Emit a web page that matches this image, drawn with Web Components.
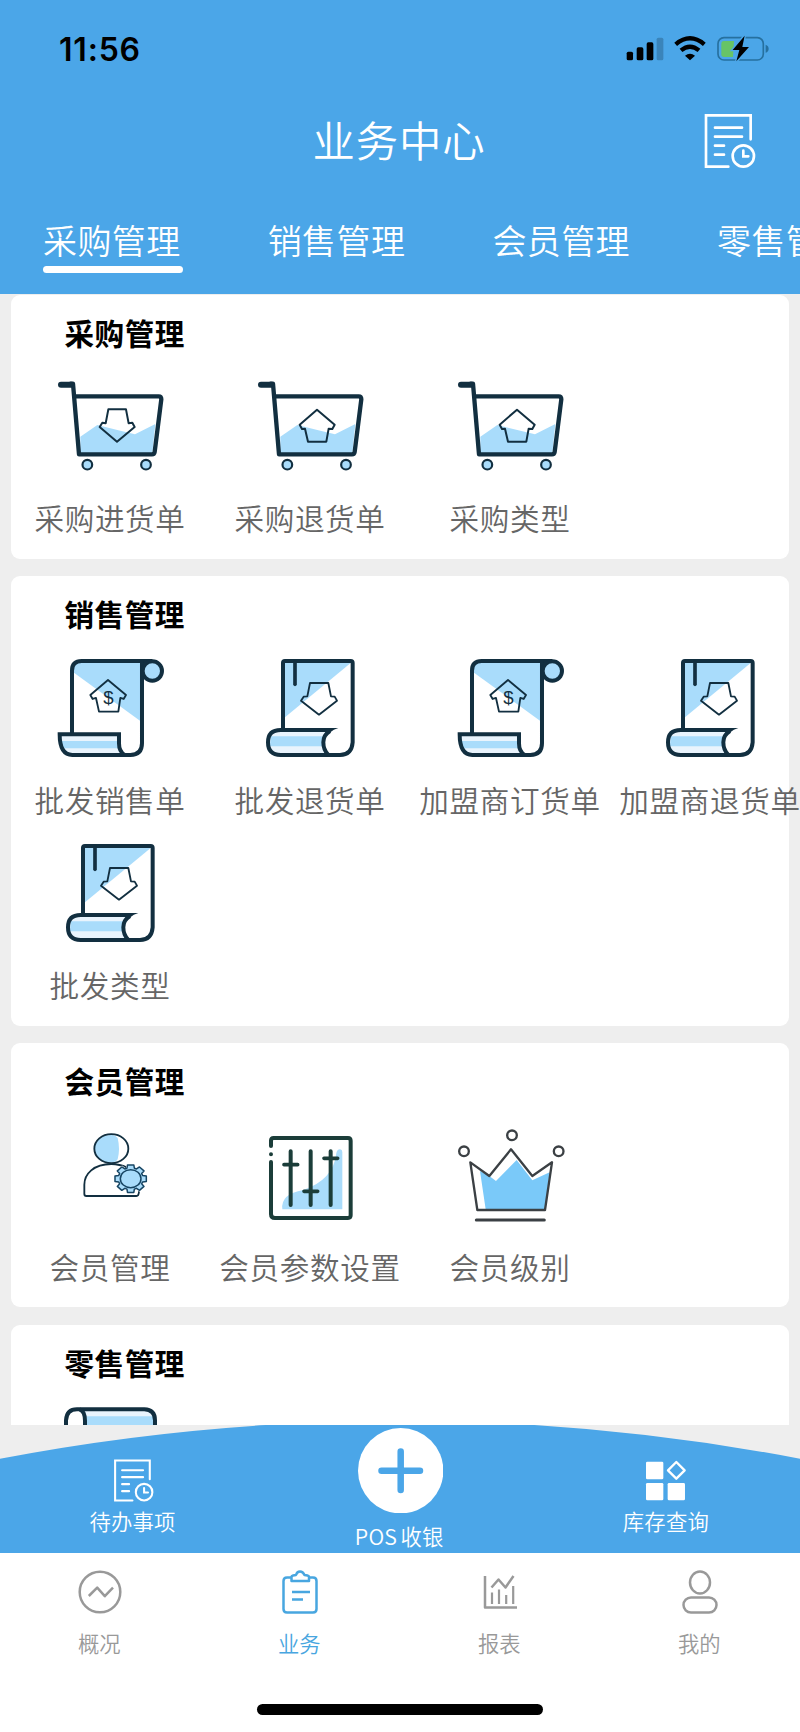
<!DOCTYPE html>
<html lang="zh-CN">
<head>
<meta charset="utf-8">
<title>业务中心</title>
<style>
html,body{margin:0;padding:0}
body{width:800px;height:1732px;overflow:hidden;background:#fff;font-family:"Noto Sans CJK SC",sans-serif;font-weight:350}
</style>
</head>
<body>
<business-app></business-app>
<script>
function define(name, html, setup) {
  const t = document.createElement('template');
  t.innerHTML = html;
  customElements.define(name, class extends HTMLElement {
    connectedCallback() {
      if (this.shadowRoot) return;
      this.attachShadow({mode: 'open'}).appendChild(t.content.cloneNode(true));
      if (setup) setup(this, this.shadowRoot);
    }
  });
}

function gear(cx, cy, sx, sy) {
  const p = [];
  for (let i = 0; i < 8; i++) {
    const a = i * Math.PI / 4;
    for (const [d, r] of [[-.3, .78], [-.2, 1], [.2, 1], [.3, .78]])
      p.push((cx + Math.cos(a + d) * r * sx).toFixed(1) + ' ' + (cy + Math.sin(a + d) * r * sy).toFixed(1));
  }
  return 'M' + p.join('L') + 'Z';
}

const NAVY = '#122f40', SKY = '#a9dcfb', PALE = '#e9f4fd';
const cart = arrow => `
<path fill="${SKY}" d="M241 440 292 405 352 420 405 433 466 402 457 489H241Z"/>
<g fill="none" stroke="${NAVY}" stroke-linejoin="round" stroke-linecap="round">
<path stroke-width="18" d="M183 284H214"/><path stroke-width="13" d="M212 281H219L237 493H456Q463 493 464 486L484 328Q484 319 476 319H226"/>
<path stroke-width="6" d="${arrow}"/></g>
<g fill="${SKY}" stroke="${NAVY}" stroke-width="6.500"><circle cx="262" cy="524" r="14.5"/><circle cx="438" cy="524" r="14.5"/></g>`;

const ICONS = {
  cartDown: ['171 249 320 320', cart('M325 358H378L386 400 397 398 404 411 351 455 299 411 307 398 317 400Z')],
  cartUp: ['171 249 320 320', cart('M351 359 404 404 397 417 386 416 379 455H324L315 416 306 417 299 404Z')],
  scroll: ['172 225 320 320', `
<path fill="${SKY}" d="M223 249H425V425L223 278Z"/>
<path fill="${PALE}" d="M182 466H357L368 521H210Q184 515 182 466Z"/><path fill="${SKY}" d="M183 483H357L362 505H191Z"/>
<g fill="none" stroke="${NAVY}" stroke-width="12">
<path d="M217 463V272Q217 243 246 243H458"/><path d="M427 243V490Q427 525 392 525H218Q180 525 180 463H358V490Q358 515 375 525"/>
<circle cx="458" cy="273" r="29" fill="${SKY}"/></g>
<path fill="none" stroke="${NAVY}" stroke-width="5.500" stroke-linejoin="round" d="M325 300 379 345 372 357 362 354 356 395H298L289 354 279 357 272 345Z"/>
<text x="326" y="373" text-anchor="middle" font-family="Liberation Sans" font-weight="400" font-size="56" fill="${NAVY}">$</text>`],
  book: ['771 225 320 320', `
<path fill="${SKY}" d="M855 249H1052L855 412Z"/>
<path fill="${PALE}" d="M842 455H985Q965 485 980 520H842Q808 518 808 487 808 458 842 455Z"/><path fill="${SKY}" d="M812 469H972L970 499H810Z"/>
<g fill="none" stroke="${NAVY}" stroke-width="12" stroke-linejoin="round">
<path d="M849 449V249Q849 243 855 243H1052Q1058 243 1058 249V487Q1055 525 1020 525H842Q804 525 804 487 804 450 842 450H985"/>
<path d="M990 453Q970 465 970 487 970 510 985 525"/><path stroke-width="11" stroke-linecap="round" d="M885 248V313"/></g>
<path fill="${NAVY}" d="M975 444H1015Q1000 448 991 457L975 456Z"/>
<path fill="none" stroke="${NAVY}" stroke-width="5.500" stroke-linejoin="round" d="M930 309H985L993 349 1004 350 1011 362 957 404 903 362 911 350 922 349Z"/>`],
  member: ['170 34 320 320', `
<path fill="${SKY}" d="M333 73Q284 75 282 114 284 153 333 156 345 156 352 146 360 114 352 82 345 72 333 73Z"/>
<g fill="none" stroke="${NAVY}" stroke-width="5.500"><ellipse cx="333" cy="114" rx="51" ry="43.500"/>
<path d="M380 171Q358 160 333 160C280 160 252 190 252 222V250Q252 256 258 256H408Q416 256 416 240"/></g>
<path fill="#fff" stroke="#fff" stroke-width="8" d="${gear(391, 204, 46, 41)}"/>
<path fill="${SKY}" stroke="#174563" stroke-width="4.500" stroke-linejoin="round" d="${gear(391, 204, 48, 42)}"/>
<ellipse cx="391" cy="204" rx="31" ry="27" fill="${SKY}" stroke="#174563" stroke-width="4.500"/>`],
  sliders: ['771 36 320 320', `
<path fill="${SKY}" d="M847 298Q841 252 910 240 1000 210 1009 130 1011 118 1020 118 1027 119 1027 126V298Z"/>
<g fill="none" stroke="#1b3d39" stroke-width="12" stroke-linecap="round"><path d="M813 108V92Q813 84 821 84H1044Q1052 84 1052 92V316Q1052 324 1044 324H825Q813 324 813 312V156M813 133v.1"/>
<path d="M872 124V285M932 124V285M992 124V285"/><path stroke-width="11" d="M852 164H893M912 244H953M972 145H1013"/></g>`],
  crown: ['171 36 320 320', `
<path fill="#7ac9f9" d="M240 183 268 198 288 213 350 150 397 211 449 187 435 298H257Z"/>
<g fill="none" stroke="#3b4044" stroke-width="7" stroke-linejoin="round"><path d="M211 157 268 198 333 118 397 198 456 157 435 300H232Z"/>
<circle cx="192" cy="124" r="14.500"/><circle cx="336" cy="76" r="14.500"/><circle cx="476" cy="124" r="14.500"/>
<path stroke-width="9" stroke-linecap="round" d="M229 330H433"/></g>`],
  roll: ['170 250 320 320', `
<path fill="${PALE}" d="M245 272H440Q462 276 464 300V340H250Z"/><path fill="${SKY}" d="M258 290H461V340H258Z"/>
<path fill="#fff" d="M225 270Q254 274 254 310H198Q200 272 225 270Z"/>
<g fill="none" stroke="${NAVY}" stroke-width="12"><path d="M197 330V302Q199 269 230 269H432Q464 270 464 302V330"/><path d="M238 269Q254 275 254 303V330"/></g>`],
  todo: ['905 335 170 175', `
<g fill="none" stroke="#fff" stroke-width="8" stroke-linecap="round"><path d="M1051 417V345H917V499H984"/>
<path d="M944 382H1025M944 409H1025M944 436H971M944 463H971"/><circle cx="1029" cy="467" r="32"/><path d="M1029 451V468H1044"/></g>`],
  stock: ['737 178 128 128', `
<g fill="#fff"><rect x="740" y="186" width="52" height="53" rx="4"/><rect x="740" y="250" width="52" height="52" rx="4"/><rect x="805" y="250" width="52" height="52" rx="4"/></g>
<path fill="none" stroke="#fff" stroke-width="7" stroke-linejoin="round" d="M831 187 856 212 831 237 806 212Z"/>`],
  signal: ['670 100 450 95', `
<rect x="681" y="156" width="19" height="26" rx="5"/><rect x="711" y="143" width="20" height="39" rx="5"/><rect x="741" y="128" width="20" height="54" rx="5"/><rect x="771" y="114" width="20" height="68" rx="5" fill="#3a84ba"/>
<g fill="none" stroke="#000" stroke-width="13"><path d="M828 134Q871 98 914 134"/><path d="M844 152Q871 130 898 152"/></g><path d="M856 168Q871 156 886 168L871 182Z"/>
<rect x="955" y="114" width="136" height="67" rx="18" fill="none" stroke="#26709f" stroke-width="5"/><path fill="#26709f" d="M1098 135Q1107 138 1107 147T1098 159Z"/>
<path fill="#67c466" d="M973 124H1003L1000 172H973Q965 172 965 164V132Q965 124 973 124Z"/>
<path stroke="#4ba6e8" stroke-width="8" paint-order="stroke" d="M1035 108 999 151H1019L1010 185 1048 142H1028Z"/>`],
  overview: ['0 0 48 48', '<circle cx="24" cy="24" r="20.300"/><path d="M12.800 28 21.200 19.600 28.800 28.200 37 19.600"/>'],
  business: ['0 0 48 48', '<path d="M15.500 9.500H11Q7.500 9.500 7.500 13V41Q7.500 44.500 11 44.500H37Q40.500 44.500 40.500 41V13Q40.500 9.500 37 9.500H33"/><path d="M15.500 13V9Q15.500 7.800 17 7.500L20 7Q21 3.500 24 3.500T28.500 7L31.500 7.500Q33 7.800 33 9V13Z"/><path d="M16 24H34M16 31.500H27"/>'],
  report: ['0 0 48 48', '<path d="M9 8V39.500H41"/><path d="M15.500 19.500 22.500 11.500 29.500 19.500 37.500 8"/><path stroke-width="2.200" d="M16 24.500V36M23 21.500V36M30.200 27V36M37.200 18V36"/>'],
  mine: ['0 0 48 48', '<ellipse cx="24" cy="14.500" rx="10" ry="11"/><rect x="7.500" y="29.500" width="33" height="15" rx="7.500"/>']
};

define('app-icon', `<style>:host{display:block;flex:none}svg{display:block;width:100%;height:100%;overflow:visible}</style>
<svg fill="currentColor"></svg>`, (el, root) => {
  const name = el.getAttribute('name'), svg = root.querySelector('svg');
  if (!ICONS[name]) return;
  svg.setAttribute('viewBox', ICONS[name][0]);
  if (['overview', 'business', 'report', 'mine'].includes(name)) {
    svg.setAttribute('fill', 'none'); svg.setAttribute('stroke', 'currentColor');
    svg.setAttribute('stroke-width', '2.500'); svg.setAttribute('stroke-linejoin', 'round');
  }
  svg.innerHTML = ICONS[name][1];
});

define('status-bar', `<style>
:host{display:flex;justify-content:space-between;align-items:center;height:98px;padding:0 27px 0 59px;box-sizing:border-box;color:#000}
time{font:600 32px/40px Inter,sans-serif;letter-spacing:.8px;margin-top:1px}
app-icon{width:150px;height:31.670px}
</style><time><slot></slot></time><app-icon name="signal"></app-icon>`);

define('page-title', `<style>
:host{display:grid;grid-template-columns:1fr auto 1fr;align-items:center;height:84px;padding:0 41px 0 42px;color:#fff}
h1{grid-column:2;margin:0 0 2px -3px;font-size:42.400px;line-height:60px;font-weight:inherit;letter-spacing:.8px}
app-icon{grid-column:3;justify-self:end;width:56.670px;height:58.330px;margin-top:1.500px}
</style><h1><slot></slot></h1><app-icon name="todo"></app-icon>`);

define('category-tab', `<style>
:host{display:flex;flex-direction:column;flex:none;width:140px;color:#fff;font-size:34px;line-height:50px;letter-spacing:.4px;white-space:nowrap}
:host([active])::after{content:"";height:6.500px;border-radius:3.500px;background:#fff;margin-top:1px}
</style><span><slot></slot></span>`);

define('category-tabs', `<style>
:host{display:flex;gap:84.700px;height:112px;box-sizing:border-box;padding:33px 0 0 43px;overflow:hidden}
</style><slot></slot>`);

define('menu-item', `<style>
:host{display:flex;flex-direction:column;align-items:center;width:200px;height:185.670px}
app-icon{width:106.670px;height:106.670px}
span{margin-top:19.300px;font-size:29.600px;line-height:38px;letter-spacing:.65px;color:#666;white-space:nowrap}
</style><app-icon></app-icon><span><slot></slot></span>`, (el, root) => {
  const old = root.querySelector('app-icon'), icon = document.createElement('app-icon');
  icon.setAttribute('name', el.getAttribute('icon'));
  old.replaceWith(icon);
});

define('menu-card', `<style>
:host{display:block;flex:none;background:#fff;border-radius:9px}
h2{margin:0;padding-left:53.500px;height:78.500px;line-height:76px;font-size:29.600px;font-weight:600;letter-spacing:.5px;color:#000;box-sizing:border-box}
div{display:grid;grid-template-columns:repeat(4,200px);margin-left:-1px}
</style><h2></h2><div><slot></slot></div>`, (el, root) => {
  root.querySelector('h2').textContent = el.getAttribute('heading');
});

define('action-item', `<style>
:host{display:flex;flex-direction:column;align-items:center;color:#fff;font-size:21.330px;line-height:30px;letter-spacing:.2px}
span{margin-right:1.500px}
</style><slot name="icon"></slot><span><slot></slot></span>`);

define('action-bar', `<style>
:host{display:grid;grid-template-columns:repeat(3,1fr);position:relative;height:128px;overflow:hidden;background:#eee}
.arc{position:absolute;inset:0;width:800px;height:128px}
action-item{position:relative;padding-top:32.500px}
action-item.main{padding-top:2.600px;word-spacing:-1.500px}
app-icon{width:44px;height:45.300px;margin:0 0 3.500px 1.500px}
app-icon.stock{width:42.670px;height:42.670px;margin:1.600px 0 4.500px 0}
.plus{display:block;width:85.400px;height:85.400px;margin:0 0 8.200px .800px}
</style>
<svg class="arc" viewBox="0 0 800 128"><path fill="#4ba6e8" d="M0 33.700A2128 2128 0 0 1 800 33.700V128H0Z"/></svg>
<action-item><app-icon slot="icon" name="todo"></app-icon>待办事项</action-item>
<action-item class="main"><svg class="plus" slot="icon" viewBox="0 0 85.400 85.400"><circle cx="42.700" cy="42.700" r="42.700" fill="#fff"/><path stroke="#4ba6e8" stroke-width="6.500" stroke-linecap="round" d="M23.500 42.700H62M42.700 23.500V62"/></svg>POS 收银</action-item>
<action-item><app-icon class="stock" slot="icon" name="stock"></app-icon>库存查询</action-item>`);

define('nav-item', `<style>
:host{display:flex;flex-direction:column;align-items:center;gap:11.500px;color:#999;font-size:21.330px;line-height:30px}
:host([active]){color:#48a6e0}
span{margin-right:1.500px}
</style><slot name="icon"></slot><span><slot></slot></span>`);

define('bottom-nav', `<style>
:host{display:flex;flex-direction:column;align-items:center;justify-content:space-between;height:179px;background:#fff;box-sizing:border-box;padding:15px 0 17px}
nav{display:grid;grid-template-columns:repeat(4,1fr);width:100%}
app-icon{width:48px;height:48px}
.home{width:286px;height:11px;border-radius:6px;background:#000}
</style><nav>
<nav-item><app-icon slot="icon" name="overview"></app-icon>概况</nav-item>
<nav-item active><app-icon slot="icon" name="business"></app-icon>业务</nav-item>
<nav-item><app-icon slot="icon" name="report"></app-icon>报表</nav-item>
<nav-item><app-icon slot="icon" name="mine"></app-icon>我的</nav-item>
</nav><div class="home"></div>`);

define('business-app', `<style>
:host{display:flex;flex-direction:column;width:800px;height:1732px;overflow:hidden}
header{height:294px;background:#4ba6e8;flex:none}
main{display:flex;flex-direction:column;gap:17.300px;height:1131px;flex:none;overflow:hidden;background:#eee;padding:.670px 11px 0;box-sizing:border-box}
</style>
<header><status-bar>11:56</status-bar><page-title>业务中心</page-title>
<category-tabs><category-tab active>采购管理</category-tab><category-tab>销售管理</category-tab><category-tab>会员管理</category-tab><category-tab>零售管理</category-tab></category-tabs></header>
<main>
<menu-card heading="采购管理"><menu-item icon="cartDown">采购进货单</menu-item><menu-item icon="cartUp">采购退货单</menu-item><menu-item icon="cartUp">采购类型</menu-item></menu-card>
<menu-card heading="销售管理"><menu-item icon="scroll">批发销售单</menu-item><menu-item icon="book">批发退货单</menu-item><menu-item icon="scroll">加盟商订货单</menu-item><menu-item icon="book">加盟商退货单</menu-item><menu-item icon="book">批发类型</menu-item></menu-card>
<menu-card heading="会员管理"><menu-item icon="member">会员管理</menu-item><menu-item icon="sliders">会员参数设置</menu-item><menu-item icon="crown">会员级别</menu-item></menu-card>
<menu-card heading="零售管理"><menu-item icon="roll"></menu-item></menu-card>
</main>
<action-bar></action-bar>
<bottom-nav></bottom-nav>`);
</script>
</body>
</html>
